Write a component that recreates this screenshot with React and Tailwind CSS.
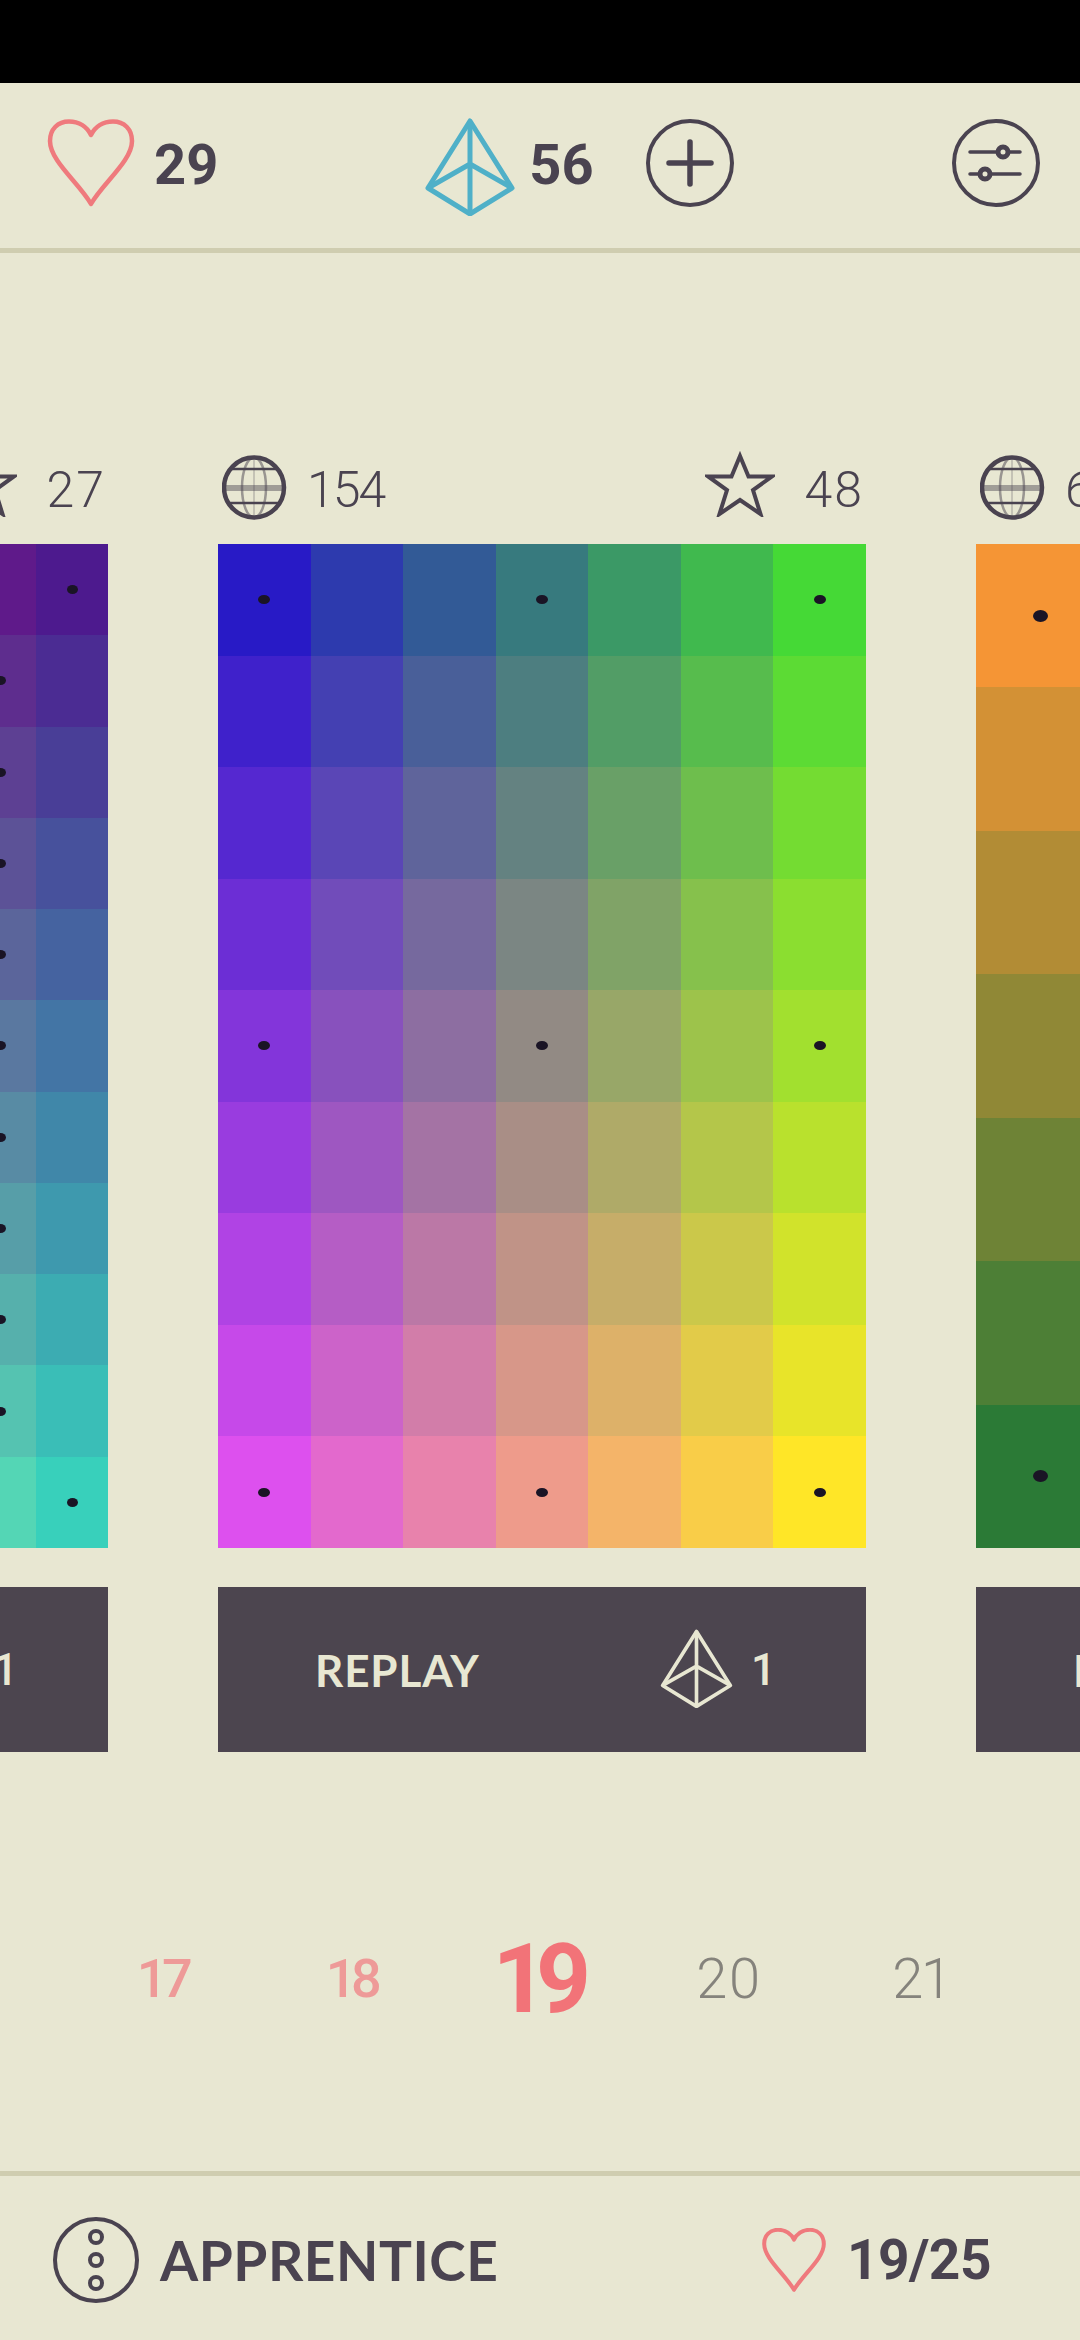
const DARK = "#4a4350";

function mix(a, b, t) {
  return a.map((v, i) => v + (b[i] - v) * t);
}

function Dot({ size }) {
  const cls = {
    sm: "w-[11px] h-[9px]",
    md: "w-[12px] h-[9px]",
    lg: "w-[15px] h-[12px]",
  }[size];
  return <span className={`${cls} rounded-[50%] bg-[#1a1425]`} />;
}

function ColorGrid({ cols, rows, tl, tr, bl, br, dots, dotSize }) {
  const cells = [];
  for (let r = 0; r < rows; r++) {
    for (let c = 0; c < cols; c++) {
      const left = mix(tl, bl, r / (rows - 1));
      const right = mix(tr, br, r / (rows - 1));
      const [red, green, blue] = mix(left, right, c / (cols - 1));
      cells.push(
        <div
          key={`${r}-${c}`}
          className="flex items-center justify-center"
          style={{ backgroundColor: `rgb(${red} ${green} ${blue})` }}
        >
          {dots.some(([dr, dc]) => dr === r && dc === c) && <Dot size={dotSize} />}
        </div>
      );
    }
  }
  return (
    <div
      className="grid w-[648px] h-[1004px]"
      style={{
        gridTemplateColumns: `repeat(${cols}, 1fr)`,
        gridTemplateRows: `repeat(${rows}, 1fr)`,
      }}
    >
      {cells}
    </div>
  );
}

function Heart({ className, stroke = 4.5 }) {
  return (
    <svg viewBox="0 0 88 88" className={className} fill="none">
      <path
        d="M44 85C32 64 3 42 3 22 3 10 11 2.500 22 2.500 32 2.500 40 8 44 16 48 8 56 2.500 66 2.500 77 2.500 85 10 85 22 85 42 56 64 44 85Z"
        stroke="#ef7a7d"
        strokeWidth={stroke}
        strokeLinejoin="round"
      />
    </svg>
  );
}

function Gem({ className, color, stroke = 5 }) {
  return (
    <svg viewBox="0 0 90 98" className={className} fill="none" stroke={color} strokeWidth={stroke} strokeLinejoin="round">
      <path d="M45 3 87 70 45 96 3 70Z" />
      <path d="M45 3V96M3 70 45 46 87 70" />
    </svg>
  );
}

function Globe() {
  return (
    <svg viewBox="0 0 65 65" className="w-[65px] h-[65px] shrink-0" fill="none" stroke={DARK}>
      <ellipse cx="32" cy="32.500" rx="12" ry="30" strokeWidth="2.500" opacity=".5" />
      <path d="M32 3V62" strokeWidth="1.500" opacity=".3" />
      <path d="M3 33H61" strokeWidth="6" opacity=".45" />
      <path d="M7 14H57M7 48H57" strokeWidth="2.500" />
      <circle cx="32" cy="32.500" r="30" strokeWidth="4.500" />
    </svg>
  );
}

function Star() {
  return (
    <svg viewBox="0 0 70 66" className="w-[70px] h-[66px] shrink-0" fill="none">
      <path
        d="M35 5 43.500 25.500 67 25.500 48 39 55.500 63 35 49 14.500 63 22 39 3 25.500 26.500 25.500Z"
        stroke={DARK}
        strokeWidth="4"
        strokeLinejoin="miter"
      />
    </svg>
  );
}

function Card({ stats, rating, grid }) {
  return (
    <div className="w-[648px] shrink-0">
      <div className="h-[93px] flex justify-between items-start text-[50px] font-light text-[#4a4350] leading-none font-['Roboto',sans-serif]">
        <div className="flex items-start pl-[4px] pt-[4px]">
          <Globe />
          <span className="ml-[20px] mt-[10px] tracking-[-0.04em]">{stats}</span>
        </div>
        <div className="flex items-start pr-[2px]">
          <Star />
          <span className="ml-[30px] mt-[14px] tracking-[0.04em]">{rating}</span>
        </div>
      </div>
      <ColorGrid {...grid} />
      <div className="mt-[39px] h-[165px] flex items-center bg-[#4c454f] text-[#e8e7d2] text-[44px] font-bold leading-none">
        <span className="ml-[97px] w-[345px] tracking-[0.02em]">REPLAY</span>
        <Gem className="w-[73px] h-[79px] shrink-0 mb-[2px]" color="#e8e7d2" stroke="4.5" />
        <span className="ml-[18px] font-['Roboto',sans-serif] font-medium">1</span>
      </div>
    </div>
  );
}

const leftGrid = {
  cols: 9,
  rows: 11,
  tl: [221, 26, 110],
  tr: [77, 26, 142],
  bl: [280, 256, 139],
  br: [56, 208, 187],
  dotSize: "sm",
  dots: [[0, 8], [1, 7], [2, 7], [3, 7], [4, 7], [5, 7], [6, 7], [7, 7], [8, 7], [9, 7], [10, 8]],
};

const midGrid = {
  cols: 7,
  rows: 9,
  tl: [40, 26, 198],
  tr: [69, 217, 54],
  bl: [221, 80, 238],
  br: [255, 230, 39],
  dotSize: "md",
  dots: [[0, 0], [0, 3], [0, 6], [4, 0], [4, 3], [4, 6], [8, 0], [8, 3], [8, 6]],
};

const rightGrid = {
  cols: 5,
  rows: 7,
  tl: [245, 149, 53],
  tr: [240, 60, 90],
  bl: [43, 122, 54],
  br: [40, 60, 160],
  dotSize: "lg",
  dots: [[0, 0], [6, 0]],
};

export default function App() {
  return (
    <div className="w-[1080px] h-[2340px] overflow-hidden flex flex-col bg-[#e8e7d2] font-['Lato',sans-serif]">
      <div className="h-[83px] bg-black shrink-0" />

      <header className="h-[170px] shrink-0 flex items-center pb-[5px] border-b-[5px] border-[#cfcdb0] text-[#4a4350] font-['Roboto',sans-serif]">
        <Heart className="w-[88px] h-[88px] ml-[47px] shrink-0" />
        <span className="ml-[19px] mt-[4px] text-[56px] font-bold leading-none">29</span>
        <Gem className="w-[90px] h-[98px] ml-[207px] mt-[8px] shrink-0" color="#4fb0c8" />
        <span className="ml-[14px] mt-[4px] text-[56px] font-bold leading-none">56</span>
        <svg viewBox="0 0 88 88" className="w-[88px] h-[88px] ml-[52px] shrink-0" fill="none" stroke={DARK}>
          <circle cx="44" cy="44" r="42" strokeWidth="4" />
          <path d="M23 44H65M44 23V65" strokeWidth="5.500" strokeLinecap="round" />
        </svg>
        <svg viewBox="0 0 88 88" className="w-[88px] h-[88px] ml-[218px] shrink-0" fill="none" stroke={DARK}>
          <circle cx="44" cy="44" r="42" strokeWidth="4" />
          <path d="M18 33H68M18 55H68" strokeWidth="3.500" strokeLinecap="round" />
          <circle cx="51" cy="33" r="5" fill="#e8e7d2" strokeWidth="5" />
          <circle cx="33" cy="55" r="5" fill="#e8e7d2" strokeWidth="5" />
        </svg>
      </header>

      <main className="flex gap-[110px] ml-[-540px] pt-[198px] shrink-0">
        <Card stats="154" rating="27" grid={leftGrid} />
        <Card stats="154" rating="48" grid={midGrid} />
        <Card stats="61" rating="12" grid={rightGrid} />
      </main>

      <nav className="flex-1 flex justify-center items-center pt-[34px] leading-none font-['Roboto',sans-serif]">
        <span className="w-[189px] text-center text-[54px] font-medium text-[#ee9a98] tracking-[-0.1em]">17</span>
        <span className="w-[189px] text-center text-[54px] font-medium text-[#ee9a98] tracking-[-0.1em]">18</span>
        <span className="w-[189px] pr-[8px] text-center text-[96px] font-bold text-[#f27378] tracking-[-0.12em]">19</span>
        <span className="w-[189px] text-center text-[56px] font-light text-[#85837c] tracking-[0.03em]">20</span>
        <span className="w-[189px] pl-[6px] text-center text-[56px] font-light text-[#85837c] tracking-[-0.04em]">21</span>
      </nav>

      <footer className="h-[169px] shrink-0 flex items-center pt-[4px] border-t-[5px] border-[#cfcdb0] text-[#4a4350] text-[55px] font-bold leading-none">
        <svg viewBox="0 0 86 86" className="w-[86px] h-[86px] ml-[53px] shrink-0" fill="none" stroke={DARK}>
          <circle cx="43" cy="43" r="41" strokeWidth="4" />
          <circle cx="43" cy="20" r="6" strokeWidth="4" />
          <circle cx="43" cy="43" r="6" strokeWidth="4" />
          <circle cx="43" cy="66" r="6" strokeWidth="4" />
        </svg>
        <span className="ml-[21px] w-[266px] whitespace-nowrap tracking-[0.01em]">APPRENTICE</span>
        <Heart className="w-[64px] h-[64px] ml-[336px] shrink-0" stroke={5.500} />
        <span className="ml-[21px] font-['Roboto',sans-serif] tracking-[-0.01em]">19/25</span>
      </footer>
    </div>
  );
}
